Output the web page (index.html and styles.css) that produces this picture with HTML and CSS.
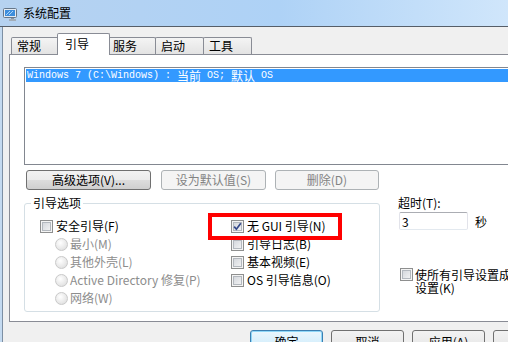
FILE: index.html
```html
<!DOCTYPE html>
<html lang="zh-CN">
<head>
  <meta charset="UTF-8">
  <title>系统配置</title>
  <link rel="stylesheet" href="styles.css">
</head>
<body>

<div class="window">
  <div class="titlebar">
    <svg class="app-icon" viewBox="0 0 14 13" width="14" height="13">
      <rect x="0.5" y="0.5" width="13" height="9" rx="1" fill="#e4eaf1" stroke="#66778a"/>
      <rect x="2" y="2" width="10" height="6" fill="#3d8ddc"/>
      <path d="M3 7 L7 3 M6 7 L10 3" stroke="#a9d4fb" stroke-width="1"/>
      <rect x="8" y="10" width="3" height="1" fill="#8a96a3"/>
      <rect x="6" y="11" width="7" height="2" fill="#a3adb8"/>
    </svg>
    <span class="title">系统配置</span>
  </div>

  <div class="frame">
    <div class="client">
      <div class="tabs">
        <div class="tab">常规</div>
        <div class="tab active">引导</div>
        <div class="tab">服务</div>
        <div class="tab">启动</div>
        <div class="tab">工具</div>
      </div>

      <div class="panel">
        <!-- OS list -->
        <div class="os-list">
          <div class="os-item selected"><span class="en">Windows 7 (C:\Windows) : </span>当前<span class="en"> OS; </span>默认<span class="en"> OS</span></div>
        </div>

        <div class="list-buttons">
          <button class="btn btn-advanced">高级选项(V)...</button>
          <button class="btn btn-setdefault" disabled>设为默认值(S)</button>
          <button class="btn btn-delete" disabled>删除(D)</button>
        </div>

        <div class="lower">
          <!-- Boot options -->
          <fieldset class="boot-options">
            <legend>引导选项</legend>
            <div class="opt-cols">
              <div class="col-left">
                <label class="row"><span class="check"></span>安全引导(F)</label>
                <label class="row radio-row"><span class="radio"></span>最小(M)</label>
                <label class="row radio-row"><span class="radio"></span>其他外壳(L)</label>
                <label class="row radio-row"><span class="radio"></span>Active Directory 修复(P)</label>
                <label class="row radio-row"><span class="radio"></span>网络(W)</label>
              </div>
              <div class="col-right">
                <label class="row"><span class="check checked"><svg viewBox="0 0 9 9" width="9" height="9"><path d="M1.2 4.6 L3.4 7.2 L7.8 1.2" fill="none" stroke="#34498a" stroke-width="1.7"/></svg></span>无 GUI 引导(N)</label>
                <label class="row"><span class="check"></span>引导日志(B)</label>
                <label class="row"><span class="check"></span>基本视频(E)</label>
                <label class="row"><span class="check"></span>OS 引导信息(O)</label>
              </div>
            </div>
          </fieldset>

          <div class="side">
            <div class="timeout-label">超时(T):</div>
            <div class="timeout-row">
              <input class="timeout" type="text" value="3">
              <span class="unit">秒</span>
            </div>
            <label class="row perm"><span class="check"></span><span class="perm-text">使所有引导设置成为永久设置(K)</span></label>
          </div>

          <div class="highlight"></div>
        </div>
      </div>

      <div class="dialog-buttons">
        <button class="btn btn-ok">确定</button>
        <button class="btn">取消</button>
        <button class="btn">应用(A)</button>
        <button class="btn">帮助</button>
      </div>
    </div>
  </div>
</div>

</body>
</html>
```

FILE: styles.css
```css
* { box-sizing: border-box; }
body { margin: 0; width: 508px; height: 342px; overflow: hidden; font-family: "Noto Sans CJK SC", "Liberation Sans", sans-serif; font-size: 12px; color: #000; }
.window { width: 508px; height: 342px; overflow: hidden; background: #c4daf0; }

/* title bar */
.titlebar { height: 27px; display: flex; align-items: center; padding-left: 3px; background: linear-gradient(90deg, #b6d2f0, #aed2f6 55%, #d0e6fb); border-bottom: 1px solid #565e68; }
.app-icon { display: block; margin-top: 2px; }
.title { margin-left: 6px; line-height: 16px; }

/* client */
.frame { padding-left: 2px; height: 315px; background: #c4daf0; }
.client { height: 100%; border-left: 1px solid #7d8fa3; background: #f0f0f0; overflow: hidden; padding-top: 6px; }

/* tabs */
.tabs { display: flex; align-items: flex-end; height: 22px; margin: 0 0 -1px 8px; position: relative; z-index: 1; }
.tab { width: 49px; height: 17px; margin-bottom: 1px; margin-left: -1px; padding-left: 5px; border: 1px solid #898c95; border-bottom: none; border-radius: 2px 2px 0 0; background: linear-gradient(#f4f4f4, #e3e3e3); line-height: 16px; }
.tab:first-child { margin-left: 0; }
.tab.active { width: 53px; height: 22px; margin: 0 -2px 0 -3px; padding-left: 7px; background: #fff; line-height: 20px; position: relative; z-index: 2; }

/* panel */
.panel { width: 560px; height: 268px; margin-left: 6px; border: 1px solid #898c95; background: #fff; }
.os-list { width: 520px; height: 98px; margin: 12px 0 0 14px; padding: 1px; border: 1px solid #828790; }
.os-item { display: flex; align-items: center; height: 13px; padding-left: 1px; white-space: nowrap; line-height: 13px; }
.os-item.selected { background: #3399ff; color: #fff; }
.en { font-family: "Liberation Mono", monospace; font-size: 10px; white-space: pre; }

/* buttons */
.btn { height: 20px; padding: 0; font-family: inherit; font-size: 12px; line-height: 18px; color: #000; border: 1px solid #707070; border-radius: 3px; background: linear-gradient(#f2f2f2 0%, #ebebeb 50%, #dddddd 51%, #cfcfcf 100%); }
.btn:disabled { color: #838383; border-color: #adb2b5; background: #f4f4f4; }
.list-buttons { display: flex; margin: 5px 0 0 16px; }
.btn-advanced { width: 125px; }
.btn-setdefault { width: 105px; margin-left: 10px; }
.btn-delete { width: 104px; margin-left: 9px; }

/* lower area */
.lower { display: flex; margin: 6px 0 0 14px; position: relative; }
.boot-options { width: 356px; height: 116px; margin: 0; padding: 0; min-width: 0; border: 1px solid #d5dfe5; border-radius: 3px; }
.boot-options legend { margin-left: 6px; padding: 0 2px; line-height: 14px; }
.opt-cols { display: flex; padding: 7px 0 0 15px; }
.col-left { width: 191px; }
.row { display: flex; align-items: center; height: 18px; gap: 3px; white-space: nowrap; line-height: 14px; }
.radio-row { padding-left: 15px; gap: 2px; color: #8d8d8d; }

.check { flex: none; width: 13px; height: 13px; border: 1px solid #8e8f8f; background: linear-gradient(135deg, #cdd1d7, #f8f8f8); box-shadow: inset 0 0 0 1px #f4f4f4, inset 0 0 0 2px #b3b8be; display: flex; align-items: center; justify-content: center; }
.check svg { display: block; }
.radio { flex: none; width: 13px; height: 13px; border: 1px solid #c9c9c9; border-radius: 50%; background: radial-gradient(circle at 40% 35%, #ffffff, #e4e4e4 70%, #d6d6d6); }

/* right side */
.side { margin-left: 18px; }
.timeout-label { line-height: 14px; }
.timeout-row { display: flex; align-items: center; margin-top: 2px; }
.timeout { width: 69px; height: 18px; margin: 0 0 0 1px; padding: 0 2px; font-family: inherit; font-size: 12px; border: 1px solid #e2e3ea; border-top-color: #abadb3; border-bottom-color: #e3e9ef; border-radius: 2px; outline: none; }
.unit { margin-left: 7px; }
.row.perm { height: auto; align-items: flex-start; margin: 38px 0 0 2px; gap: 2px; }
.perm-text { width: 134px; white-space: normal; line-height: 13px; }

.highlight { position: absolute; left: 184px; top: 17px; width: 134px; height: 27px; border: 4px solid #ff0000; pointer-events: none; }

/* dialog buttons */
.dialog-buttons { display: flex; gap: 8px; margin: 8px 0 0 247px; }
.dialog-buttons .btn { flex: none; width: 73px; height: 23px; line-height: 21px; }
.btn-ok { border-color: #3c7fb1; background: linear-gradient(#eaf6fd 0%, #d9f0fc 50%, #bee6fd 51%, #a7d9f5 100%); box-shadow: inset 0 0 0 1px #8fd7f8; }
```
